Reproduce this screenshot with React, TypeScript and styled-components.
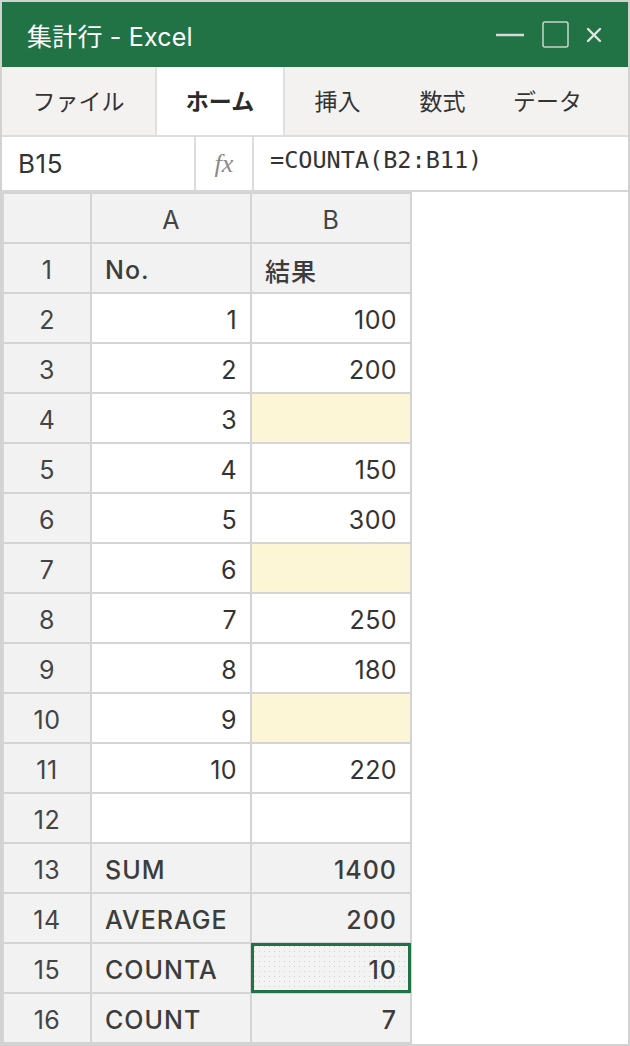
import React from "react";
import styled, { createGlobalStyle, css } from "styled-components";

const GlobalStyle = createGlobalStyle`
  * {
    box-sizing: border-box;
  }
  body {
    margin: 0;
    background: #ffffff;
    font-family: Inter, "Noto Sans CJK JP", sans-serif;
    color: #333333;
  }
`;

type Fill = "white" | "gray" | "yellow";

interface Row {
  label: string;
  a: string;
  b: string;
  fill: Fill;
  bFill?: Fill;
  text?: boolean;
  selected?: boolean;
}

const rows: Row[] = [
  { label: "1", a: "No.", b: "結果", fill: "gray", text: true },
  { label: "2", a: "1", b: "100", fill: "white" },
  { label: "3", a: "2", b: "200", fill: "white" },
  { label: "4", a: "3", b: "", fill: "white", bFill: "yellow" },
  { label: "5", a: "4", b: "150", fill: "white" },
  { label: "6", a: "5", b: "300", fill: "white" },
  { label: "7", a: "6", b: "", fill: "white", bFill: "yellow" },
  { label: "8", a: "7", b: "250", fill: "white" },
  { label: "9", a: "8", b: "180", fill: "white" },
  { label: "10", a: "9", b: "", fill: "white", bFill: "yellow" },
  { label: "11", a: "10", b: "220", fill: "white" },
  { label: "12", a: "", b: "", fill: "white" },
  { label: "13", a: "SUM", b: "1400", fill: "gray", text: true },
  { label: "14", a: "AVERAGE", b: "200", fill: "gray", text: true },
  { label: "15", a: "COUNTA", b: "10", fill: "gray", text: true, selected: true },
  { label: "16", a: "COUNT", b: "7", fill: "gray", text: true },
];

const tabs = [
  { name: "ファイル", width: 153 },
  { name: "ホーム", width: 130 },
  { name: "挿入", width: 105 },
  { name: "数式", width: 105 },
  { name: "データ", width: 105 },
];

const fills: Record<Fill, string> = {
  white: "#ffffff",
  gray: "#f2f2f2",
  yellow: "#fdf6d6",
};

const App = () => {
  return (
    <>
      <GlobalStyle />
      <Window>
        <TitleBar>
          <Title>集計行 - Excel</Title>
          <Controls>
            <svg width="30" height="4" viewBox="0 0 30 4">
              <line x1="1" y1="2" x2="29" y2="2" stroke="#d5dcd7" strokeWidth="2.5" />
            </svg>
            <svg width="27" height="27" viewBox="0 0 27 27">
              <rect x="1" y="1" width="25" height="25" rx="2" fill="none" stroke="#c9d3cc" strokeWidth="1.5" />
            </svg>
            <svg width="16" height="16" viewBox="0 0 16 16">
              <path d="M2 2 L14 14 M14 2 L2 14" stroke="#e0e5e1" strokeWidth="2.4" strokeLinecap="round" />
            </svg>
          </Controls>
        </TitleBar>

        <TabBar>
          {tabs.map((tab) => (
            <Tab key={tab.name} $width={tab.width} $active={tab.name === "ホーム"}>
              {tab.name}
            </Tab>
          ))}
        </TabBar>

        <FormulaBar>
          <NameBox>B15</NameBox>
          <FxBox>fx</FxBox>
          <Formula>=COUNTA(B2:B11)</Formula>
        </FormulaBar>

        <Sheet>
          <Grid>
            <HeaderCell />
            <HeaderCell>A</HeaderCell>
            <HeaderCell>B</HeaderCell>
            {rows.map((row) => (
              <React.Fragment key={row.label}>
                <HeaderCell>{row.label}</HeaderCell>
                <Cell $fill={row.fill} $align={row.text ? "left" : "right"} $strong={row.text}>
                  {row.a}
                </Cell>
                <Cell
                  $fill={row.bFill ?? row.fill}
                  $align={row.label === "1" ? "left" : "right"}
                  $strong={row.text}
                  $selected={row.selected}
                >
                  {row.b}
                </Cell>
              </React.Fragment>
            ))}
          </Grid>
        </Sheet>
      </Window>
    </>
  );
};

const Window = styled.div`
  width: 630px;
  height: 1046px;
  border: 2px solid #d2d2d2;
  display: flex;
  flex-direction: column;
  background: #ffffff;
  overflow: hidden;
`;

const TitleBar = styled.div`
  height: 65px;
  flex-shrink: 0;
  background: #217346;
  display: flex;
  align-items: center;
  justify-content: space-between;
  padding: 0 26px 0 25px;
`;

const Title = styled.h1`
  margin: 0;
  font-size: 25px;
  font-weight: 400;
  color: #ffffff;
  letter-spacing: 0.2px;
`;

const Controls = styled.div`
  display: flex;
  align-items: center;
  gap: 17px;

  svg {
    display: block;
  }
`;

const TabBar = styled.div`
  height: 70px;
  flex-shrink: 0;
  display: flex;
  background: #f3f2f1;
  border-bottom: 2px solid #dddddd;
`;

const Tab = styled.div<{ $width: number; $active?: boolean }>`
  width: ${({ $width }) => $width}px;
  flex-shrink: 0;
  display: flex;
  align-items: center;
  justify-content: center;
  padding-bottom: 2px;
  white-space: nowrap;
  font-family: "Noto Sans CJK JP", sans-serif;
  font-size: 23px;
  color: #333333;

  ${({ $active }) =>
    $active &&
    css`
      background: #ffffff;
      font-weight: 700;
      color: #2b2b2b;
      border-left: 2px solid #e0e0e0;
      border-right: 2px solid #e0e0e0;
    `}
`;

const FormulaBar = styled.div`
  height: 55px;
  flex-shrink: 0;
  display: flex;
  border-bottom: 2px solid #d6d6d6;
  background: #ffffff;
`;

const NameBox = styled.div`
  width: 194px;
  display: flex;
  align-items: center;
  padding-left: 16px;
  font-size: 26px;
  letter-spacing: 0.6px;
  color: #333333;
  border-right: 2px solid #dcdcdc;
`;

const FxBox = styled.div`
  width: 58px;
  display: flex;
  align-items: center;
  justify-content: center;
  font-family: "Liberation Serif", serif;
  font-style: italic;
  font-size: 26px;
  color: #8a8a8a;
  border-right: 2px solid #dcdcdc;
`;

const Formula = styled.div`
  flex: 1;
  padding: 0 0 8px 16px;
  display: flex;
  align-items: center;
  font-family: "DejaVu Sans Mono", monospace;
  font-size: 23.5px;
  color: #333333;
`;

const Sheet = styled.div`
  flex: 1;
  display: flex;
  align-items: flex-start;
`;

const Grid = styled.div`
  display: grid;
  grid-template-columns: 86px 158px 158px;
  grid-auto-rows: 48px;
  gap: 2px;
  padding: 2px;
  background: #d4d4d4;
`;

const HeaderCell = styled.div`
  background: #f2f2f2;
  display: flex;
  align-items: center;
  justify-content: center;
  padding-top: 3px;
  font-size: 25px;
  letter-spacing: 0.5px;
  color: #444444;
`;

const Cell = styled.div<{
  $fill: Fill;
  $align: "left" | "right";
  $strong?: boolean;
  $selected?: boolean;
}>`
  background: ${({ $fill }) => fills[$fill]};
  display: flex;
  align-items: center;
  justify-content: ${({ $align }) => ($align === "left" ? "flex-start" : "flex-end")};
  padding: 3px 13px 0;
  font-size: 25px;
  letter-spacing: ${({ $strong }) => ($strong ? "1px" : "0.4px")};
  font-weight: ${({ $strong }) => ($strong ? 500 : 400)};
  color: ${({ $strong }) => ($strong ? "#3c3c3c" : "#333333")};

  ${({ $selected }) =>
    $selected &&
    css`
      outline: 3px solid #217346;
      outline-offset: -2px;
      background-color: #f3f3f3;
      background-image: radial-gradient(circle, #cfcfcf 0.7px, transparent 1px);
      background-size: 5px 5px;
    `}
`;

export default App;
